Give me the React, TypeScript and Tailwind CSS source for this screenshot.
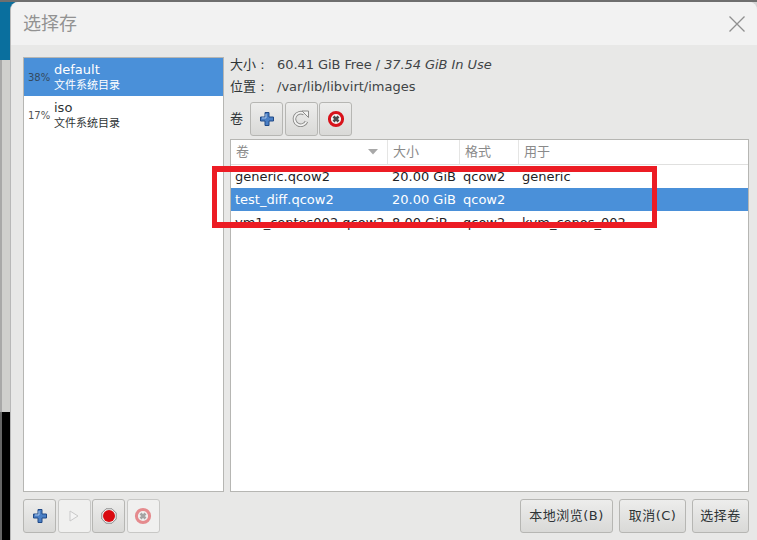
import React from 'react';

const FONT = "font-['DejaVu_Sans','Noto_Sans_CJK_SC',sans-serif]";

const PlusIcon = () => (
  <svg width="18" height="18" viewBox="0 0 18 18">
    <path d="M7 2.500h4v4.500h4.500v4H11v4.500H7V11H2.500V7H7z" fill="#4a7fc4" stroke="#204a87" strokeWidth="1" strokeLinejoin="round" />
    <path d="M8 4v4H4" fill="none" stroke="#a9c6ea" strokeWidth="1" />
  </svg>
);

const RefreshIcon = () => (
  <svg width="20" height="20" viewBox="0 0 20 20" fill="none">
    <path d="M15.500 12.500A6.300 6.300 0 1 1 13 4.600" stroke="#8b8b89" strokeWidth="3.600" />
    <path d="M15.500 12.500A6.300 6.300 0 1 1 13 4.600" stroke="#f2f2f1" strokeWidth="1.800" />
    <path d="M11 2h6.500v6.500z" fill="#f2f2f1" stroke="#8b8b89" strokeWidth="1" strokeLinejoin="round" />
  </svg>
);

const DeleteIcon = ({ faded }: { faded?: boolean }) => (
  <svg width="18" height="18" viewBox="0 0 18 18" opacity={faded ? 0.45 : 1}>
    <circle cx="9" cy="9" r="6.600" fill="#f2f2f2" stroke="#d8121a" strokeWidth="3" />
    <path d="M6.500 6.500l5 5M11.500 6.500l-5 5" stroke="#4a4a4a" strokeWidth="2.600" />
  </svg>
);

const PlayIcon = () => (
  <svg width="12" height="14" viewBox="0 0 12 14">
    <path d="M2 2l8 5-8 5z" fill="#f4f4f4" stroke="#c9c9c9" strokeWidth="1" />
  </svg>
);

const RecordIcon = () => (
  <svg width="16" height="16" viewBox="0 0 16 16">
    <path d="M5 .8h6L15.200 5v6L11 15.200H5L.8 11V5z" fill="#f2f2f2" stroke="#8a8a8a" strokeWidth="1" />
    <circle cx="8" cy="8" r="6" fill="#d90a10" />
  </svg>
);

const IconButton = ({ children, disabled }: { children: React.ReactNode; disabled?: boolean }) => (
  <button
    disabled={disabled}
    className={
      disabled
        ? 'flex h-[34px] w-[33px] items-center justify-center rounded-[3px] border border-[#c8c8c6] bg-[#f0f0ef]'
        : 'flex h-[34px] w-[33px] items-center justify-center rounded-[3px] border border-[#b6b6b3] bg-gradient-to-b from-[#ededec] to-[#d9d9d7]'
    }
  >
    {children}
  </button>
);

const TextButton = ({ label, width }: { label: string; width: string }) => (
  <button className={`flex h-[34px] items-center justify-center rounded-[3px] border border-[#b6b6b3] bg-gradient-to-b from-[#ededec] to-[#d9d9d7] text-[13px] tracking-[0.5px] text-[#2e3436] ${width}`}>
    {label}
  </button>
);

const pools = [
  { pct: '38%', name: 'default', selected: true },
  { pct: '17%', name: 'iso', selected: false },
];

const volumes = [
  { name: 'generic.qcow2', size: '20.00 GiB', format: 'qcow2', used: 'generic', selected: false },
  { name: 'test_diff.qcow2', size: '20.00 GiB', format: 'qcow2', used: '', selected: true },
  { name: 'vm1_centos002.qcow2', size: '8.00 GiB', format: 'qcow2', used: 'kvm_cenos_002', selected: false },
];

const COLUMNS = 'grid grid-cols-[157px_72px_59px_1fr]';

export default function App() {
  return (
    <div className={`${FONT} relative flex h-[540px] w-[757px] flex-col overflow-hidden bg-[#e8e8e7] text-[13px]`}>
      <div className="h-[2px] shrink-0 bg-[#6f6f6f]" />
      <div className="flex min-h-0 flex-1 bg-[linear-gradient(90deg,#0a6f9e_50%,#d5d5d5_50%)]">
        <div className="flex w-[10px] shrink-0 flex-col">
          <div className="h-[58px] bg-[#0a6f9e]" />
          <div className="flex-1 border-l-2 border-[#a8a8a8] bg-[#cfcfcd]" />
          <div className="h-[128px] border-l-2 border-[#666] bg-black" />
        </div>

        <div className="flex min-w-0 flex-1 flex-col overflow-hidden rounded-t-[8px] border-l border-[#b8b8b8] bg-[#e8e8e7]">
          <header className="flex h-[43px] shrink-0 items-center justify-between bg-[#f2f2f2] pl-3 pr-[12px]">
            <span className="text-[18px] text-[#929292]">选择存</span>
            <svg width="16" height="16" viewBox="0 0 16 16" fill="none" stroke="#8f8f8f" strokeWidth="1.300">
              <path d="M.5.5l15 15M15.500.5l-15 15" />
            </svg>
          </header>

          <div className="flex min-h-0 flex-1 flex-col gap-[7px] pb-[7px] pl-3 pr-2 pt-3">
            <div className="flex min-h-0 flex-1 gap-[6px]">
              <div className="w-[201px] shrink-0 border border-[#b6b6b3] bg-white">
                {pools.map((pool) => (
                  <div
                    key={pool.name}
                    className={
                      pool.selected
                        ? 'flex h-[38px] items-center bg-[#4a90d9] text-white'
                        : 'flex h-[38px] items-center bg-white text-[#2e3436]'
                    }
                  >
                    <span className={pool.selected ? 'w-[30px] pl-[4px] text-[10px] text-[#34495e]' : 'w-[30px] pl-[4px] text-[10px] text-[#555]'}>
                      {pool.pct}
                    </span>
                    <div className="flex flex-col">
                      <span className="text-[13px] leading-[16px]">{pool.name}</span>
                      <span className="text-[11px] leading-[15px]">文件系统目录</span>
                    </div>
                  </div>
                ))}
              </div>

              <div className="flex min-w-0 flex-1 flex-col text-[#2e3436]">
                <div className="flex h-4 items-center">
                  <span className="w-[47px]">大小 :</span>
                  <span className="tracking-[-0.07px] text-[#404446]">
                    60.41 GiB Free / <em>37.54 GiB In Use</em>
                  </span>
                </div>
                <div className="mt-[6px] flex h-4 items-center">
                  <span className="w-[47px]">位置 :</span>
                  <span className="text-[#404446]">/var/lib/libvirt/images</span>
                </div>
                <div className="mt-[7px] flex h-[34px] items-center">
                  <span className="w-5">卷</span>
                  <div className="flex gap-[1.5px]">
                    <IconButton><PlusIcon /></IconButton>
                    <IconButton><RefreshIcon /></IconButton>
                    <IconButton><DeleteIcon /></IconButton>
                  </div>
                </div>

                <div className="mt-[3px] min-h-0 flex-1 border border-[#b6b6b3] bg-white">
                  <div className={`${COLUMNS} h-[25px] border-b border-[#e0e0df] text-[#8a8a8a]`}>
                    <div className="flex items-center justify-between border-r border-[#e5e5e4] pl-[5px] pr-[9px]">
                      <span>卷</span>
                      <svg width="10" height="6" viewBox="0 0 10 6">
                        <path d="M0 0h10L5 5.500z" fill="#a8a8a8" />
                      </svg>
                    </div>
                    <div className="flex items-center border-r border-[#e5e5e4] pl-[5px]">大小</div>
                    <div className="flex items-center border-r border-[#e5e5e4] pl-[5px]">格式</div>
                    <div className="flex items-center pl-[5px]">用于</div>
                  </div>
                  {volumes.map((vol) => (
                    <div
                      key={vol.name}
                      className={
                        vol.selected
                          ? `${COLUMNS} h-[23px] items-center bg-[#4a90d9] text-white`
                          : `${COLUMNS} h-[23px] items-center bg-white text-[#1f2325]`
                      }
                    >
                      <span className="truncate pl-[4px]">{vol.name}</span>
                      <span className="whitespace-nowrap pl-[4px]">{vol.size}</span>
                      <span className="pl-[3px]">{vol.format}</span>
                      <span className="pl-[3px]">{vol.used}</span>
                    </div>
                  ))}
                </div>
              </div>
            </div>

            <footer className="flex h-[34px] shrink-0 items-center justify-between">
              <div className="flex gap-[1.5px]">
                <IconButton><PlusIcon /></IconButton>
                <IconButton disabled><PlayIcon /></IconButton>
                <IconButton><RecordIcon /></IconButton>
                <IconButton disabled><DeleteIcon faded /></IconButton>
              </div>
              <div className="flex gap-[6px]">
                <TextButton label="本地浏览(B)" width="w-[93px]" />
                <TextButton label="取消(C)" width="w-[67px]" />
                <TextButton label="选择卷" width="w-[57px]" />
              </div>
            </footer>
          </div>
        </div>
      </div>

      {/* red annotation drawn over the screenshot */}
      <div className="absolute left-[212px] top-[166px] h-[62px] w-[445px] border-[5px] border-t-[6px] border-b-[6px] border-[#ec1c24]" />
    </div>
  );
}
